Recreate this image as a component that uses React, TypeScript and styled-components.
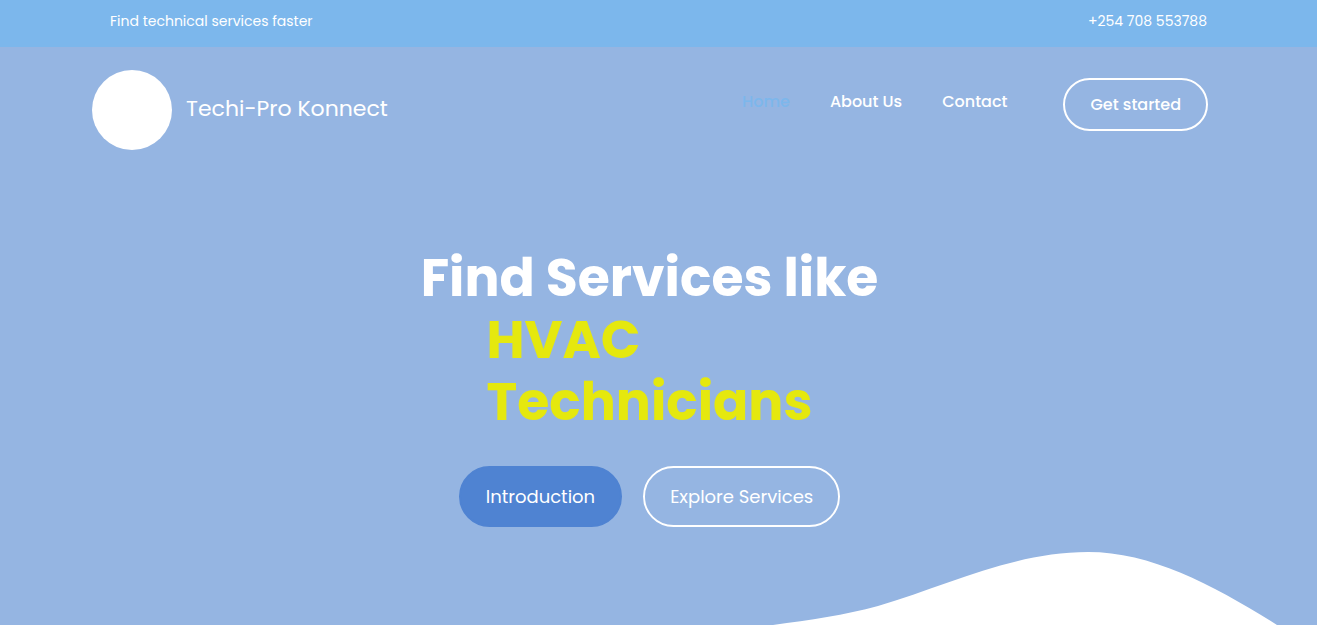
import React from 'react';
import styled, { createGlobalStyle } from 'styled-components';

const GlobalStyle = createGlobalStyle`
  * { box-sizing: border-box; }
  body {
    margin: 0;
    background: #95b5e2;
    color: #fff;
    font-family: Poppins, Inter, "Open Sans", sans-serif;
  }
  a { color: inherit; text-decoration: none; }
`;

const Page = styled.div`
  display: flex;
  flex-direction: column;
  min-height: 100vh;
`;

const TopBar = styled.div`
  display: flex;
  justify-content: space-between;
  height: 47px;
  padding: 10px 110px 0;
  background: #7cb7ec;
  font-size: 14px;
  line-height: 22px;
`;

const Header = styled.header`
  display: flex;
  justify-content: space-between;
  align-items: flex-start;
  padding: 23px 109px 0 92px;
`;

const Brand = styled.a`
  display: flex;
  align-items: center;
  gap: 14px;
  font-size: 22px;
  line-height: 32px;
`;

const BrandName = styled.span`
  padding-bottom: 2px;
`;

const Logo = styled.span`
  width: 80px;
  height: 80px;
  border-radius: 50%;
  background: #fff;
`;

const Nav = styled.nav`
  display: flex;
  gap: 40px;
  padding-top: 8px;
`;

const NavLink = styled.a<{ $active?: boolean }>`
  padding-top: 12px;
  font-size: 16px;
  font-weight: 500;
  line-height: 24px;
  color: ${(p) => (p.$active ? '#7cb7ec' : '#fff')};
`;

const Button = styled.button<{ $filled?: boolean; $small?: boolean }>`
  height: ${(p) => (p.$small ? 53 : 61)}px;
  padding: 0 25px;
  border: 2px solid ${(p) => (p.$filled ? '#4f83d2' : '#fff')};
  border-radius: 50px;
  background: ${(p) => (p.$filled ? '#4f83d2' : 'transparent')};
  color: #fff;
  font-family: inherit;
  font-size: ${(p) => (p.$small ? 16 : 18)}px;
  font-weight: ${(p) => (p.$small ? 500 : 400)};
  cursor: pointer;
`;

const StartButton = styled(Button)`
  margin-left: 16px;
`;

const Hero = styled.main`
  display: flex;
  flex-direction: column;
  align-items: center;
  padding: 97px 18px 24px 0;
`;

const Title = styled.h1`
  display: flex;
  flex-direction: column;
  align-items: center;
  margin: 0;
  font-size: 52px;
  font-weight: 700;
  line-height: 62px;
`;

const Accent = styled.span`
  width: min-content;
  color: #e5e80e;
`;

const Actions = styled.div`
  display: flex;
  gap: 21px;
  margin-top: 33px;
`;

const Wave = styled.svg`
  display: block;
  width: 100%;
  margin-top: auto;
`;

export default function App() {
  return (
    <Page>
      <GlobalStyle />
      <TopBar>
        <span>Find technical services faster</span>
        <a href="tel:+254708553788">+254 708 553788</a>
      </TopBar>
      <Header>
        <Brand href="#">
          <Logo />
          <BrandName>Techi-Pro Konnect</BrandName>
        </Brand>
        <Nav>
          <NavLink href="#" $active>Home</NavLink>
          <NavLink href="#about">About Us</NavLink>
          <NavLink href="#contact">Contact</NavLink>
          <StartButton type="button" $small>Get started</StartButton>
        </Nav>
      </Header>
      <Hero>
        <Title>
          <span>Find Services like</span>
          <Accent>HVAC Technicians</Accent>
        </Title>
        <Actions>
          <Button type="button" $filled>Introduction</Button>
          <Button type="button">Explore Services</Button>
        </Actions>
      </Hero>
      <Wave viewBox="0 0 1317 74" aria-hidden="true">
        <path
          fill="#fff"
          d="M773 74C810 69 845 64 878 55C948 34 1014 1 1088 1C1152 1 1215 35 1277 74Z"
        />
      </Wave>
    </Page>
  );
}
